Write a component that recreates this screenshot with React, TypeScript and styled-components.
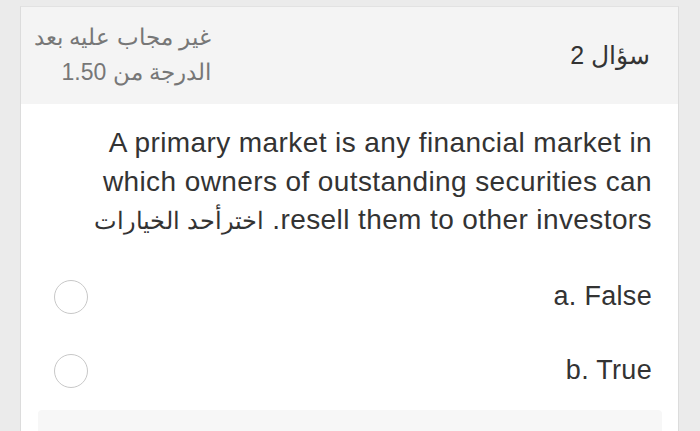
import styled, { createGlobalStyle } from "styled-components";

const Global = createGlobalStyle`
  html, body {
    margin: 0;
    padding: 0;
    background: #ebebeb;
    font-family: "Liberation Sans", "Noto Sans", Arial, sans-serif;
  }
`;

const Page = styled.div`
  direction: rtl;
  padding: 6px 21px 0 20px;
  height: 425px;
  overflow: hidden;
`;

const Card = styled.div`
  background: #fff;
  border-left: 1px solid #dcdcdc;
  border-right: 1px solid #dcdcdc;
  border-top: 1px solid #e2e2e2;
  height: 100%;
`;

const Header = styled.div`
  display: flex;
  justify-content: space-between;
  align-items: center;
  background: #f4f4f4;
  height: 97px;
  padding: 0 28px 0 0;
`;

const QTitle = styled.div`
  font-size: 25px;
  color: #333;
`;

const Meta = styled.div`
  display: flex;
  flex-direction: column;
  gap: 6px;
  width: 190px;
  font-size: 23px;
  line-height: 29px;
  color: #777;
  margin-top: -2px;
`;

const Body = styled.div`
  padding: 20px 26px 0 48px;
`;

const Question = styled.p`
  margin: 0 0 20px;
  font-size: 28px;
  letter-spacing: 0.4px;
  line-height: 38.5px;
  color: #333;
  text-align: right;
`;

const Hint = styled.span`
  font-size: 24px;
  line-height: 1;
  letter-spacing: 0;
`;

const Option = styled.label`
  display: flex;
  align-items: center;
  justify-content: space-between;
  height: 74px;
`;

const OptText = styled.span`
  font-size: 27px;
  letter-spacing: 0.3px;
  color: #333;
`;

const Radio = styled.span`
  width: 34px;
  height: 34px;
  border-radius: 50%;
  border: 1.5px solid #c8c8c8;
  box-sizing: border-box;
  margin-left: -15px;
`;

const Footer = styled.div`
  margin: 2px -10px 0 -31px;
  background: #f7f7f7;
  height: 40px;
  border-radius: 4px;
`;

const options = ["a. False", "b. True"];

export default function App() {
  return (
    <>
      <Global />
      <Page>
        <Card>
          <Header>
            <QTitle>سؤال 2</QTitle>
            <Meta>
              <span>غير مجاب عليه بعد</span>
              <span>الدرجة من 1.50</span>
            </Meta>
          </Header>
          <Body>
            <Question>
              A primary market is any financial market in which owners of
              outstanding securities can resell them to other investors.{" "}
              <Hint>اخترأحد الخيارات</Hint>
            </Question>
            {options.map((o) => (
              <Option key={o}>
                <OptText>{o}</OptText>
                <Radio />
              </Option>
            ))}
            <Footer />
          </Body>
        </Card>
      </Page>
    </>
  );
}
